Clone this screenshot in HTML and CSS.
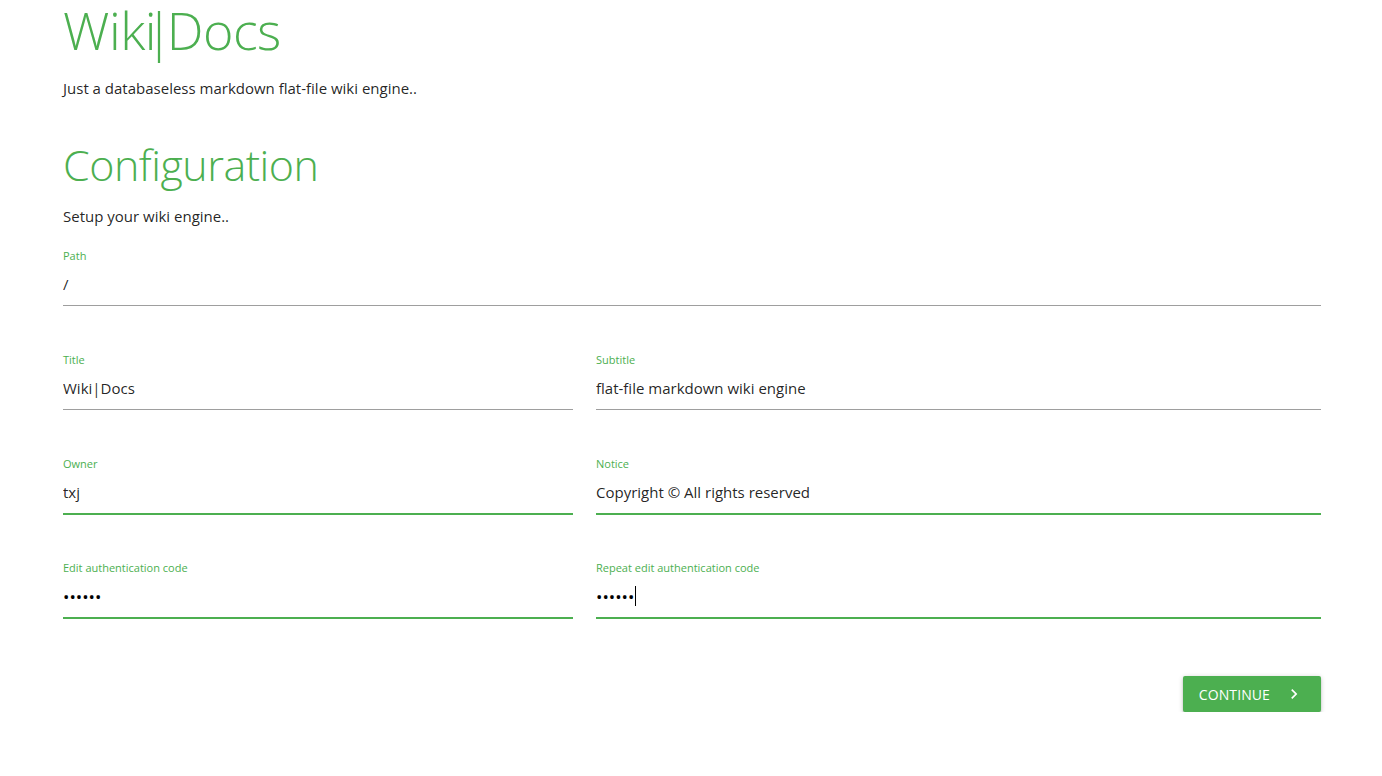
FILE: index.html
```html
<!DOCTYPE html>
<html lang="en">
<head>
    <meta charset="UTF-8">
    <meta name="viewport" content="width=device-width, initial-scale=1.0">
    <title>Wiki|Docs - Setup</title>
    <link rel="stylesheet" href="styles.css">
</head>
<body>
    <div class="container">
        <h2 class="titulo">Wiki<span class="barra">|</span>Docs</h2>
        <p class="descricao">Just a databaseless markdown flat-file wiki engine..</p>

        <h3 class="secao">Configuration</h3>
        <p class="descricao">Setup your wiki engine..</p>

        <form class="formulario" onsubmit="return false">
            <div class="linha">
                <div class="campo s12">
                    <label for="path">Path</label>
                    <input type="text" name="path" id="path" value="/">
                </div>
            </div>
            <div class="linha">
                <div class="campo s5">
                    <label for="title">Title</label>
                    <input type="text" name="title" id="title" value="Wiki|Docs">
                </div>
                <div class="campo s7">
                    <label for="subtitle">Subtitle</label>
                    <input type="text" name="subtitle" id="subtitle" value="flat-file markdown wiki engine">
                </div>
            </div>
            <div class="linha">
                <div class="campo s5">
                    <label for="owner">Owner</label>
                    <input type="text" name="owner" id="owner" class="valido" value="txj">
                </div>
                <div class="campo s7">
                    <label for="notice">Notice</label>
                    <input type="text" name="notice" id="notice" class="valido" value="Copyright © All rights reserved">
                </div>
            </div>
            <div class="linha">
                <div class="campo s5">
                    <label for="editcode">Edit authentication code</label>
                    <input type="password" name="editcode" id="editcode" class="valido" value="123456">
                </div>
                <div class="campo s7">
                    <label for="editcode2">Repeat edit authentication code</label>
                    <div class="senha">
                        <input type="password" name="editcode2" id="editcode2" class="valido" value="123456">
                        <span class="cursor"></span>
                    </div>
                </div>
            </div>
            <div class="rodape">
                <button type="submit" class="btn">
                    Continue
                    <svg class="seta" width="20" height="20" viewBox="0 0 24 24"><path d="M8.6 16.6 13.2 12 8.6 7.4 10 6l6 6-6 6z" fill="#fff"/></svg>
                </button>
            </div>
        </form>
    </div>
</body>
</html>
```

FILE: styles.css
```css
* {
    padding: 0px;
    margin: 0px;
    box-sizing: border-box;
}

body {
    font-family: "Open Sans", "Noto Sans", sans-serif;
    color: rgba(0, 0, 0, 0.87);
    background-color: #fff;
}

.container {
    padding: 0 61px 0 63px;
}

.titulo {
    font-weight: 300;
    font-size: 52px;
    line-height: 60px;
    color: #4caf50;
    letter-spacing: -0.5px;
}

.barra {
    margin: 0 -6px 0 -11px;
}

.descricao {
    font-size: 15px;
    line-height: 22px;
    margin-top: 17px;
}

.secao {
    font-weight: 300;
    font-size: 43px;
    line-height: 54px;
    color: #4caf50;
    margin-top: 39px;
    letter-spacing: -0.5px;
}

.secao + .descricao {
    margin-top: 13px;
}

.formulario {
    margin-top: 20px;
}

/* Campos */

.linha {
    display: flex;
    gap: 23px;
    margin-bottom: 45px;
}

.campo {
    display: flex;
    flex-direction: column;
}

.s12 {
    width: 100%;
}

.s5 {
    width: 510px;
}

.s7 {
    flex: 1;
}

.campo label {
    font-size: 11px;
    line-height: 14px;
    padding-top: 2px;
    color: #4caf50;
}

.campo input {
    font-family: inherit;
    font-size: 15px;
    color: rgba(0, 0, 0, 0.87);
    height: 43px;
    border: none;
    border-bottom: 1px solid #9e9e9e;
    outline: none;
    background: transparent;
    width: 100%;
}

.campo input.valido {
    border-bottom: 1px solid #4caf50;
    box-shadow: 0 1px 0 0 #4caf50;
}

.campo input[type="password"] {
    font-size: 17px;
    color: #000;
}

.senha {
    position: relative;
}

.cursor {
    position: absolute;
    left: 39px;
    top: 11px;
    width: 1px;
    height: 20px;
    background-color: #000;
}

/* Botao */

.rodape {
    display: flex;
    justify-content: flex-end;
    margin-top: 58px;
}

.btn {
    display: flex;
    align-items: center;
    gap: 14px;
    height: 36px;
    padding: 0 17px 0 16px;
    border: none;
    border-radius: 2px;
    background-color: #4caf50;
    color: #fff;
    font-family: inherit;
    font-size: 14px;
    letter-spacing: 0.1px;
    text-transform: uppercase;
    box-shadow: 0 2px 2px 0 rgba(0, 0, 0, 0.14), 0 3px 1px -2px rgba(0, 0, 0, 0.12), 0 1px 5px 0 rgba(0, 0, 0, 0.2);
    cursor: pointer;
}
```
